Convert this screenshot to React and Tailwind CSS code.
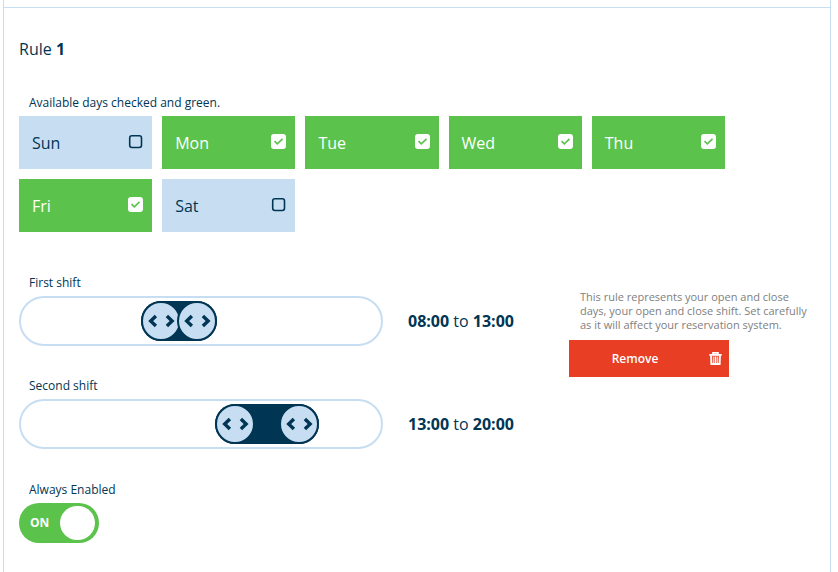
import React, { useState } from 'react';
import clsx from 'clsx';

const DAYS = ['Sun', 'Mon', 'Tue', 'Wed', 'Thu', 'Fri', 'Sat'];

const formatHour = (hour) => `${String(hour).padStart(2, '0')}:00`;

const DayTile = ({ day, checked, onChange }) => (
  <label
    className={clsx(
      'flex h-[53px] cursor-pointer items-center justify-between pr-[9px] pl-[13px] text-base',
      checked ? 'bg-[#5bc34b] font-medium text-white' : 'bg-[#c7def2] text-[#003554]'
    )}
  >
    {day}
    <span className="relative mb-0.5 flex">
      <input
        type="checkbox"
        checked={checked}
        onChange={onChange}
        className="size-[15px] cursor-pointer appearance-none rounded-[3px] checked:bg-white"
      />
      <svg viewBox="0 0 15 15" className="pointer-events-none absolute inset-0 size-[15px]" fill="none">
        {checked ? (
          <path d="M3.5 7.2 L6.3 9.8 L11.5 4.8" stroke="#5bc34b" strokeWidth="1.6" />
        ) : (
          <rect x="1.7" y="1.7" width="11.8" height="11.8" rx="2.2" stroke="#003554" strokeWidth="1.6" />
        )}
      </svg>
    </span>
  </label>
);

const Handle = ({ className }) => (
  <span
    className={clsx(
      'flex size-10 shrink-0 items-center justify-center rounded-full border-2 border-[#003554] bg-[#c7def2]',
      className
    )}
  >
    <svg viewBox="0 0 28 14" className="h-[14px] w-7 shrink-0" fill="none" stroke="#003554" strokeWidth="3.4">
      <path d="M8.9 2 L3.7 7 L8.9 12" />
      <path d="M19.9 2 L25.1 7 L19.9 12" />
    </svg>
  </span>
);

const rangeInput =
  'pointer-events-none absolute inset-0 m-0 w-full cursor-pointer opacity-0 [&::-webkit-slider-thumb]:pointer-events-auto';

const ShiftSlider = ({ label, value, onChange }) => {
  const [start, end] = value;

  return (
    <div>
      <p className="pl-[10px] text-xs leading-[22px]">{label}</p>
      <div className="mt-0.5 flex items-center gap-[25px]">
        <div className="relative h-[50px] min-w-0 flex-1 rounded-full border-2 border-[#c7def2]">
          <div className="absolute inset-y-[3px] right-[3px] left-[2px]">
            <div
              className="absolute inset-y-0 flex min-w-[76px] items-center justify-between rounded-full bg-[#003554]"
              style={{ left: `${(start / 24) * 100}%`, width: `${((end - start) / 24) * 100}%` }}
            >
              <Handle />
              <Handle className="-ml-1" />
            </div>
          </div>
          <input
            type="range"
            min="0"
            max="24"
            value={start}
            aria-label={`${label} opens`}
            onChange={(e) => onChange([Math.min(Number(e.target.value), end - 1), end])}
            className={rangeInput}
          />
          <input
            type="range"
            min="0"
            max="24"
            value={end}
            aria-label={`${label} closes`}
            onChange={(e) => onChange([start, Math.max(Number(e.target.value), start + 1)])}
            className={rangeInput}
          />
        </div>
        <p className="w-[110px] text-base whitespace-nowrap">
          <b>{formatHour(start)}</b> to <b>{formatHour(end)}</b>
        </p>
      </div>
    </div>
  );
};

const TrashIcon = () => (
  <svg viewBox="0 0 13 13" className="size-[13px]" fill="none" stroke="currentColor">
    <path d="M0.3 2.9 H12.7" strokeWidth="1.8" />
    <path d="M4 2.5 V0.9 H9 V2.5" strokeWidth="1.6" />
    <path d="M2.1 3.5 L2.4 12 H10.6 L10.9 3.5" strokeWidth="2" />
    <path d="M4.8 4.6 V11 M6.5 4.6 V11 M8.2 4.6 V11" strokeWidth="1.1" />
  </svg>
);

const App = () => {
  const [days, setDays] = useState(['Mon', 'Tue', 'Wed', 'Thu', 'Fri']);
  const [firstShift, setFirstShift] = useState([8, 13]);
  const [secondShift, setSecondShift] = useState([13, 20]);
  const [enabled, setEnabled] = useState(true);

  const toggleDay = (day) => {
    setDays(days.includes(day) ? days.filter((d) => d !== day) : [...days, day]);
  };

  return (
    <div className="min-h-screen bg-white pr-[7px] pl-[3px] font-['Open_Sans',sans-serif] text-[#003554]">
      <div className="min-h-screen border-x border-[#c7def2] pt-[7px]">
        <section className="border-t border-[#c7def2] px-[15px] pt-7 pb-7">
          <h2 className="text-base leading-[26px]">
            Rule <b>1</b>
          </h2>

          <fieldset className="mt-[30px] max-w-[706px]">
            <legend className="pl-[10px] text-xs leading-[22px]">Available days checked and green.</legend>
            <div className="mt-0.5 grid grid-cols-5 gap-[10px]">
              {DAYS.map((day) => (
                <DayTile key={day} day={day} checked={days.includes(day)} onChange={() => toggleDay(day)} />
              ))}
            </div>
          </fieldset>

          <div className="mt-10 flex gap-[51px]">
            <div className="flex max-w-[499px] flex-1 flex-col gap-[29px]">
              <ShiftSlider label="First shift" value={firstShift} onChange={setFirstShift} />
              <ShiftSlider label="Second shift" value={secondShift} onChange={setSecondShift} />
            </div>
            <div className="w-[240px] pt-[18px]">
              <p className="pl-[11px] text-[11px] leading-[14px] text-[#808080]">
                This rule represents your open and close days, your open and close shift. Set carefully as it will
                affect your reservation system.
              </p>
              <button
                type="button"
                className="mt-2 flex h-[37px] w-40 cursor-pointer items-center bg-[#e73e24] pr-[7px] text-xs font-semibold text-white"
              >
                <span className="flex-1 pr-2">Remove</span>
                <TrashIcon />
              </button>
            </div>
          </div>

          <div className="mt-[30px]">
            <label htmlFor="always-enabled" className="block pl-[10px] text-xs leading-[22px]">
              Always Enabled
            </label>
            <div
              className={clsx(
                'relative mt-0.5 flex h-10 w-20 items-center justify-between rounded-full pr-1 pl-[11px] text-xs font-bold text-white',
                enabled ? 'bg-[#5bc34b]' : 'flex-row-reverse bg-gray-400'
              )}
            >
              <span>{enabled ? 'ON' : 'OFF'}</span>
              <span className="h-[34px] w-[35px] rounded-full bg-white" />
              <input
                id="always-enabled"
                type="checkbox"
                checked={enabled}
                onChange={() => setEnabled(!enabled)}
                className="absolute inset-0 size-full cursor-pointer appearance-none rounded-full"
              />
            </div>
          </div>
        </section>
      </div>
    </div>
  );
};

export default App;
